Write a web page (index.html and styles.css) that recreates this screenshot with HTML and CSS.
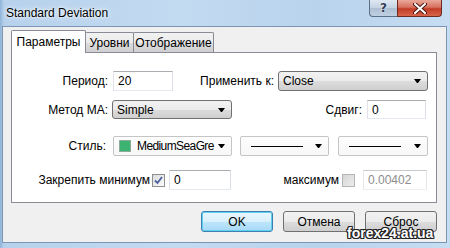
FILE: index.html
```html
<!DOCTYPE html>
<html lang="ru">

<head>
    <meta charset="UTF-8">
    <title>Standard Deviation</title>
    <link rel="stylesheet" href="styles.css">
</head>

<body>
    <div class="window">
        <!-- Заголовок окна -->
        <div class="titlebar">
            <span class="title">Standard Deviation</span>
            <div class="caption">
                <span class="cap-btn help">?</span>
                <span class="cap-btn close">
                    <svg width="14" height="11" viewBox="0 0 14 11">
                        <path d="M2 1 L12 10 M12 1 L2 10" stroke="#4a1a14" stroke-width="4" stroke-linecap="round"/>
                        <path d="M2 1 L12 10 M12 1 L2 10" stroke="#fff" stroke-width="2" stroke-linecap="round"/>
                    </svg>
                </span>
            </div>
        </div>

        <div class="frame">
            <div class="client">
                <!-- Вкладки -->
                <div class="tabs">
                    <div class="tab active">Параметры</div>
                    <div class="tab t2">Уровни</div>
                    <div class="tab t3">Отображение</div>
                </div>

                <div class="panel">
                    <div class="row r1">
                        <label class="lbl w-period">Период:</label>
                        <div class="edit w-60">20</div>
                        <label class="lbl w-apply">Применить к:</label>
                        <div class="combo w-150"><span>Close</span><i class="arrow"></i></div>
                    </div>

                    <div class="row r2">
                        <label class="lbl w-method">Метод МА:</label>
                        <div class="combo w-120"><span>Simple</span><i class="arrow"></i></div>
                        <label class="lbl w-shift">Сдвиг:</label>
                        <div class="edit w-59">0</div>
                    </div>

                    <div class="row r3">
                        <label class="lbl w-style">Стиль:</label>
                        <div class="list w-119">
                            <span class="swatch"></span>
                            <span class="color-name">MediumSeaGre</span>
                            <i class="arrow"></i>
                        </div>
                        <div class="list w-89 gap-8"><span class="line"></span><i class="arrow"></i></div>
                        <div class="list w-90 gap-9"><span class="line"></span><i class="arrow"></i></div>
                    </div>

                    <div class="row r4">
                        <label class="lbl w-min">Закрепить минимум</label>
                        <span class="check on">
                            <svg width="9" height="9" viewBox="0 0 9 9"><path d="M1 4.5 L3.5 7 L8 1" fill="none" stroke="#4b61a0" stroke-width="1.8"/></svg>
                        </span>
                        <div class="edit w-62 gap-4">0</div>
                        <label class="lbl w-max">максимум</label>
                        <span class="check off"></span>
                        <div class="edit disabled w-64 gap-8">0.00402</div>
                    </div>
                </div>

                <!-- Кнопки -->
                <div class="buttons">
                    <button class="btn default">OK</button>
                    <button class="btn">Отмена</button>
                    <button class="btn">Сброс</button>
                </div>
            </div>
        </div>

        <div class="watermark">forex24.at.ua</div>
    </div>
</body>

</html>
```

FILE: styles.css
```css
body {
    margin: 0;
    font-family: "Liberation Sans", Arial, sans-serif;
    font-size: 12px;
    color: #000;
    background: #a9c6e4;
}

.window {
    position: relative;
    width: 450px;
    height: 248px;
    overflow: hidden;
    background: linear-gradient(to right, #8fb3d8, #b7d1ec 4px, #c3dbf1 40%, #b9d3ed 70%, #c6ddf2);
}

.titlebar {
    height: 27px;
    display: flex;
    justify-content: space-between;
    align-items: flex-start;
}

.title {
    padding: 6px 0 0 6px;
    font-size: 12px;
    text-shadow: 0 0 6px #fff, 0 0 3px #fff;
}

.caption {
    display: flex;
    margin-right: 8px;
}

.cap-btn {
    height: 16px;
    display: flex;
    align-items: center;
    justify-content: center;
    border: 1px solid #5b6f86;
    border-top: none;
}

.help {
    width: 27px;
    border-radius: 0 0 0 4px;
    border-right: none;
    background: linear-gradient(#dfe8f2, #c3d2e2 50%, #aebfd3 51%, #bfd0e2);
    color: #2f3e55;
    font-family: "DejaVu Sans", sans-serif;
    font-size: 12px;
    font-weight: bold;
    text-shadow: 0 0 2px #fff;
}

.close {
    width: 43px;
    border-color: #6e2a22;
    border-radius: 0 0 4px 0;
    background: linear-gradient(#eaa99b, #d7705f 45%, #c23c26 55%, #d8664b);
}

.frame {
    padding: 0 4px 6px 3px;
}

.client {
    height: 215px;
    background: #f0f0f0;
    box-shadow: 0 0 0 1px #7b96b4;
    padding: 3px 9px 0 8px;
    box-sizing: border-box;
}

/* Вкладки */
.tabs {
    display: flex;
    align-items: flex-end;
    height: 22px;
}

.tab {
    height: 19px;
    border: 1px solid #898c95;
    border-bottom: none;
    border-radius: 2px 2px 0 0;
    background: linear-gradient(#f2f2f2, #ebebeb 50%, #dddddd 51%, #cfcfcf);
    display: flex;
    align-items: center;
    justify-content: center;
    box-sizing: content-box;
}

.tab.active {
    position: relative;
    z-index: 1;
    width: 73px;
    height: 22px;
    margin-bottom: -1px;
    background: #fff;
}

.t2 {
    width: 47px;
    margin-left: -1px;
}

.t3 {
    width: 79px;
    margin-left: -1px;
}

.panel {
    height: 151px;
    border: 1px solid #898c95;
    background: #fff;
    padding-top: 18px;
    box-sizing: border-box;
}

.row {
    display: flex;
    align-items: center;
}

.r1 {
    height: 20px;
}

.r2 {
    height: 19px;
    margin-top: 9px;
}

.r3 {
    height: 20px;
    margin-top: 17px;
}

.r4 {
    height: 20px;
    margin-top: 14px;
}

.lbl {
    text-align: right;
    white-space: nowrap;
    flex: none;
}

.w-period { width: 96px; margin-right: 5px; }
.w-apply { width: 101px; margin-right: 4px; }
.w-method { width: 96px; margin-right: 4px; }
.w-shift { width: 130px; margin-right: 5px; }
.w-style { width: 94px; margin-right: 7px; }
.w-min { width: 138px; margin-right: 2px; }
.w-max { width: 108px; margin-right: 3px; }

.w-60 { width: 60px; }
.w-59 { width: 59px; }
.w-62 { width: 62px; }
.w-64 { width: 64px; }
.w-89 { width: 89px; }
.w-90 { width: 90px; }
.w-119 { width: 119px; }
.w-120 { width: 120px; }
.w-150 { width: 150px; }

.gap-4 { margin-left: 4px; }
.gap-8 { margin-left: 8px; }
.gap-9 { margin-left: 9px; }

.edit {
    height: 100%;
    box-sizing: border-box;
    border: 1px solid;
    border-color: #abadb3 #dbdfe6 #e3e9ef #e2e3ea;
    padding: 2px 0 0 4px;
    flex: none;
}

.edit.disabled {
    color: #8d8d8d;
    border-color: #c9cacd #e4e6ea #eceef1 #e6e7eb;
}

.combo,
.list {
    height: 100%;
    box-sizing: border-box;
    display: flex;
    align-items: center;
    flex: none;
    padding: 0 0 0 4px;
    position: relative;
}

.combo {
    border: 1px solid #707070;
    border-radius: 3px;
    background: linear-gradient(#f2f2f2, #ebebeb 50%, #dddddd 51%, #cfcfcf);
}

.list {
    border: 1px solid #c5c5c5;
    border-radius: 2px;
    background: linear-gradient(#fdfdfd, #f7f7f7);
}

.arrow {
    width: 1px;
    height: 0;
    flex: none;
    border-left: 3px solid transparent;
    border-right: 3px solid transparent;
    border-top: 4px solid #000;
    margin-left: auto;
    margin-right: 6px;
}

.swatch {
    width: 12px;
    height: 12px;
    flex: none;
    background: #3cb371;
    border: 1px solid #8fa99a;
    box-sizing: border-box;
    margin: 0 6px 0 1px;
}

.color-name {
    letter-spacing: -0.6px;
    white-space: nowrap;
}

.line {
    width: 52px;
    height: 1px;
    background: #000;
    margin-left: 6px;
}

.check {
    width: 13px;
    height: 13px;
    box-sizing: border-box;
    border: 1px solid #8f8f8f;
    background: linear-gradient(135deg, #dcdcdc, #fbfbfb);
    display: flex;
    align-items: center;
    justify-content: center;
    flex: none;
}

.check.off {
    border-color: #b5b5b5;
    background: linear-gradient(135deg, #d6d6d6, #ececec);
}

/* Кнопки */
.buttons {
    display: flex;
    justify-content: flex-end;
    gap: 10px;
    margin-top: 8px;
}

button {
    font-family: "Liberation Sans", Arial, sans-serif;
    font-size: 12px;
    width: 72px;
    height: 21px;
    padding: 0;
    border: 1px solid #707070;
    border-radius: 3px;
    background: linear-gradient(#f2f2f2, #ebebeb 50%, #dddddd 51%, #cfcfcf);
    color: #000;
}

button.default {
    border-color: #3c7fb1;
    box-shadow: inset 0 0 0 1px #5fd0ef;
    background: linear-gradient(#eaf6fd, #d9f0fc 50%, #bee6fd 51%, #a7d9f5);
}

.watermark {
    position: absolute;
    left: 347px;
    top: 225px;
    font-family: "Liberation Sans", Arial, sans-serif;
    font-weight: bold;
    font-size: 14px;
    line-height: 16px;
    color: #fff;
    text-shadow: 1px 1px 0 #222, -1px -1px 0 #222, 1px -1px 0 #222, -1px 1px 0 #222, 0 1px 0 #222, 1px 0 0 #222, 0 -1px 0 #222, -1px 0 0 #222;
}
```
